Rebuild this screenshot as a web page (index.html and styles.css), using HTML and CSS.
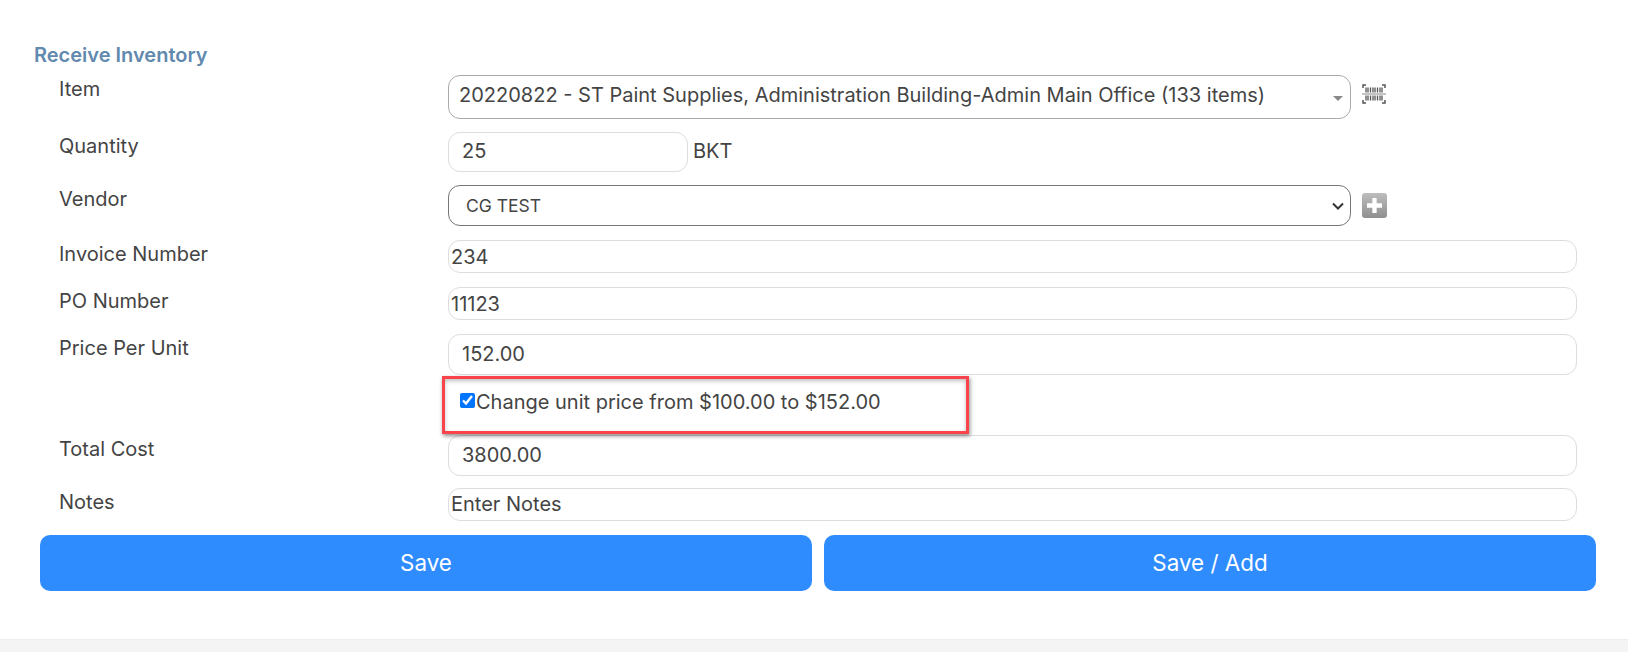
FILE: index.html
```html
<!DOCTYPE html>
<html lang="en">
<head>
<meta charset="utf-8">
<title>Receive Inventory</title>
<link rel="stylesheet" href="styles.css">
</head>
<body>
<main class="panel">
  <h2 class="title">Receive Inventory</h2>
  <form class="form">
    <div class="row row-item">
      <label class="label">Item</label>
      <div class="field with-icon">
        <div class="combo"><span class="combo-text">20220822 - ST Paint Supplies, Administration Building-Admin Main Office (133 items)</span><span class="caret"></span></div>
        <svg class="barcode" width="24" height="22" viewBox="0 0 24 22" aria-hidden="true">
          <path d="M1 5V2h3M20 2h3v3M1 17v3h3M20 20h3v-3" fill="none" stroke="#555" stroke-width="1.500"/>
          <path d="M4 4.500v5M6 4.500v5M8.500 4.500v5M11 4.500v5M13 4.500v5M15.500 4.500v5M18 4.500v5M20 4.500v5M4 12.500v5M6 12.500v5M8.500 12.500v5M11 12.500v5M13 12.500v5M15.500 12.500v5M18 12.500v5M20 12.500v5" fill="none" stroke="#555" stroke-width="1.300"/>
          <path d="M0 11h24" stroke="#888" stroke-width="1"/>
        </svg>
      </div>
    </div>
    <div class="row row-qty">
      <label class="label">Quantity</label>
      <div class="field qty">
        <input class="input input-tall input-short" type="text" value="25">
        <span class="unit">BKT</span>
      </div>
    </div>
    <div class="row row-vendor">
      <label class="label">Vendor</label>
      <div class="field with-icon">
        <select class="select"><option>CG TEST</option></select>
        <span class="plus"><svg width="15" height="15" viewBox="0 0 14 14" aria-hidden="true"><path d="M5 0h4v5h5v4H9v5H5V9H0V5h5z" fill="#fff"/></svg></span>
      </div>
    </div>
    <div class="row row-slim">
      <label class="label">Invoice Number</label>
      <div class="field"><input class="input input-slim" type="text" value="234"></div>
    </div>
    <div class="row row-slim2">
      <label class="label">PO Number</label>
      <div class="field"><input class="input input-slim" type="text" value="11123"></div>
    </div>
    <div class="row row-price">
      <label class="label">Price Per Unit</label>
      <div class="field"><input class="input input-tall" type="text" value="152.00"></div>
    </div>
    <div class="row row-check">
      <span class="label"></span>
      <div class="field check-wrap">
        <label class="check"><input class="checkbox" type="checkbox" checked>Change unit price from $100.00 to $152.00</label>
      </div>
    </div>
    <div class="row row-total">
      <label class="label">Total Cost</label>
      <div class="field"><input class="input input-tall" type="text" value="3800.00"></div>
    </div>
    <div class="row row-notes">
      <label class="label">Notes</label>
      <div class="field"><input class="input input-slim input-notes" type="text" placeholder="Enter Notes"></div>
    </div>
    <div class="actions">
      <button class="btn" type="button">Save</button>
      <button class="btn" type="button">Save / Add</button>
    </div>
  </form>
</main>
<footer class="footer"></footer>
</body>
</html>
```
FILE: styles.css
```css
*, *::before { box-sizing: border-box; }
html, body { margin: 0; padding: 0; }
body {
  width: 1628px;
  height: 652px;
  overflow: hidden;
  background: #fff;
  font-family: Inter, "Liberation Sans", sans-serif;
  font-size: 20px;
  color: #444;
}
.panel { height: 639px; padding: 44px 32px 0 34px; }
.title {
  margin: 0;
  font-size: 20px;
  line-height: 22px;
  font-weight: 600;
  color: #6289ae;
}
.form { display: flex; flex-direction: column; margin-top: 9px; }
.row { display: flex; padding-left: 25px; }
.label { width: 389px; flex: none; line-height: 22px; padding-top: 3px; }
.field { flex: 1; min-width: 0; display: flex; align-items: center; padding-right: 19px; }
.row-item { height: 57px; }
.row-qty { height: 53px; }
.row-vendor { height: 55px; }
.row-slim { height: 47px; }
.row-slim2 { height: 47px; }
.row-price { height: 43px; }
.row-check { height: 58px; }
.row-total { height: 53px; }
.row-notes { height: 47px; }
.row-item .field, .row-qty .field, .row-vendor .field,
.row-slim .field, .row-slim2 .field, .row-price .field,
.row-total .field, .row-notes .field { align-items: flex-start; }
.with-icon { gap: 11px; }
.combo {
  width: 903px;
  height: 44px;
  border: 1px solid #aaa;
  border-radius: 12px;
  display: flex;
  align-items: center;
  justify-content: space-between;
  padding: 0 7px 4px 10px;
  background: #fff;
}
.combo-text { white-space: nowrap; }
.caret {
  width: 0;
  height: 0;
  border-left: 5px solid transparent;
  border-right: 5px solid transparent;
  border-top: 5px solid #888;
  margin-top: 6px;
}
.barcode { margin-top: 8px; }
.select {
  width: 903px;
  height: 41px;
  border: 1px solid #767676;
  border-radius: 12px;
  appearance: none;
  background: #fff url("data:image/svg+xml,%3Csvg xmlns='http://www.w3.org/2000/svg' width='12' height='8' viewBox='0 0 12 8'%3E%3Cpath d='M1 1.500l5 5 5-5' fill='none' stroke='%23333' stroke-width='2'/%3E%3C/svg%3E") no-repeat right 6px center;
  font-family: inherit;
  font-size: 17.500px;
  color: #444;
  padding: 0 17px;
}
.plus {
  width: 25px;
  height: 25px;
  margin-top: 8px;
  border-radius: 3px;
  background: linear-gradient(#bdbdbd, #8f8f8f);
  display: flex;
  align-items: center;
  justify-content: center;
}
.input {
  width: 100%;
  border: 1px solid #ddd;
  border-radius: 12px;
  background: #fff;
  font-family: inherit;
  font-size: 20px;
  color: #444;
  outline: none;
}
.input::placeholder { color: #444; opacity: 1; }
.input-tall { height: 41px; padding: 0 13px 2px; }
.input-slim { height: 33px; padding: 0 2px; }
.input-notes { padding-bottom: 2px; }
.input-short { width: 240px; height: 40px; }
.qty { gap: 5px; }
.unit { line-height: 38px; }
.check-wrap { align-items: flex-start; position: relative; }
.check-wrap::before {
  content: "";
  position: absolute;
  left: -6px;
  top: -1px;
  width: 527px;
  height: 58px;
  border: 3px solid #f8444a;
  box-shadow: 1px 2px 4px rgba(0, 0, 0, .45), inset 0 2px 4px rgba(0, 0, 0, .25);
  pointer-events: none;
}
.check { display: flex; align-items: flex-start; line-height: 24px; padding: 13px 0 0 12px; }
.checkbox { width: 15px; height: 15px; margin: 3px 1px 0 0; accent-color: #0075ff; }
.actions { display: flex; gap: 12px; margin: 0 0 0 6px; }
.btn {
  flex: 1;
  height: 56px;
  border: 0;
  border-radius: 10px;
  background: #2f8cff;
  color: #fff;
  font-family: inherit;
  font-size: 22.400px;
  padding: 0 0 2px;
}
.footer { height: 13px; background: #f4f4f4; border-top: 1px solid #eee; }
```
